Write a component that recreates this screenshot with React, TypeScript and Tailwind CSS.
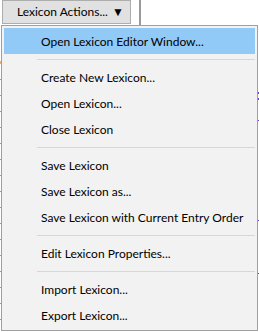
import React from "react";

type Entry = { label: string; active?: boolean } | "sep";

const entries: Entry[] = [
  { label: "Open Lexicon Editor Window...", active: true },
  "sep",
  { label: "Create New Lexicon..." },
  { label: "Open Lexicon..." },
  { label: "Close Lexicon" },
  "sep",
  { label: "Save Lexicon" },
  { label: "Save Lexicon as..." },
  { label: "Save Lexicon with Current Entry Order" },
  "sep",
  { label: "Edit Lexicon Properties..." },
  "sep",
  { label: "Import Lexicon..." },
  { label: "Export Lexicon..." },
];

export default function App() {
  return (
    <div
      className="relative w-[259px] h-[332px] overflow-hidden bg-white text-[12px] text-black"
      style={{ fontFamily: '"Lato", "Liberation Sans", sans-serif' }}
    >
      {/* toolbar behind the menu */}
      <div className="flex h-[26px] items-start">
        <button className="ml-[2px] flex h-[24px] w-[129px] items-center gap-[4px] border border-[#adadad] bg-[#e1e1e1] pl-[14px] whitespace-nowrap">
          <span>Lexicon Actions...</span>
          <span className="text-[12px] leading-none">▼</span>
        </button>
        <div className="ml-[8px] h-[26px] w-[2px] bg-[#9a9a9a]" />
      </div>

      {/* table grid lines peeking out under the menu */}
      <div className="flex justify-between">
        <div className="flex flex-col gap-[15px] pt-[35px]">
          <div className="h-[3px] w-px bg-[#f0b060]" />
          {Array.from({ length: 16 }).map((_, i) => (
            <div key={i} className="h-px w-px bg-[#9a9a9a]" />
          ))}
        </div>
        <div className="flex flex-col pt-[66px]">
          <div className="h-[2px] w-px bg-[#6a3cc8]" />
          <div className="mt-[4px] h-[2px] w-px bg-[#6a3cc8]" />
          <div className="mt-[20px] h-px w-px bg-[#6a3cc8]" />
          <div className="mt-[99px] h-px w-px bg-[#6a3cc8]" />
          <div className="mt-[52px] h-px w-px bg-[#6a3cc8]" />
        </div>
      </div>

      {/* dropdown menu */}
      <div className="absolute left-[1px] top-[25px] w-[257px] border border-[#a0a0a0] bg-[#f2f2f2] p-[2px]">
        {entries.map((e, i) =>
          e === "sep" ? (
            <div key={i} className="flex h-[10px] items-center pl-[33px]">
              <div className="h-px w-full bg-[#d7d7d7]" />
            </div>
          ) : (
            <div
              key={i}
              className={
                "flex h-[26px] items-center whitespace-nowrap pl-[37px] pt-[1px] " +
                (e.active ? "bg-[#91c9f7]" : "")
              }
            >
              {e.label}
            </div>
          )
        )}
      </div>
    </div>
  );
}
